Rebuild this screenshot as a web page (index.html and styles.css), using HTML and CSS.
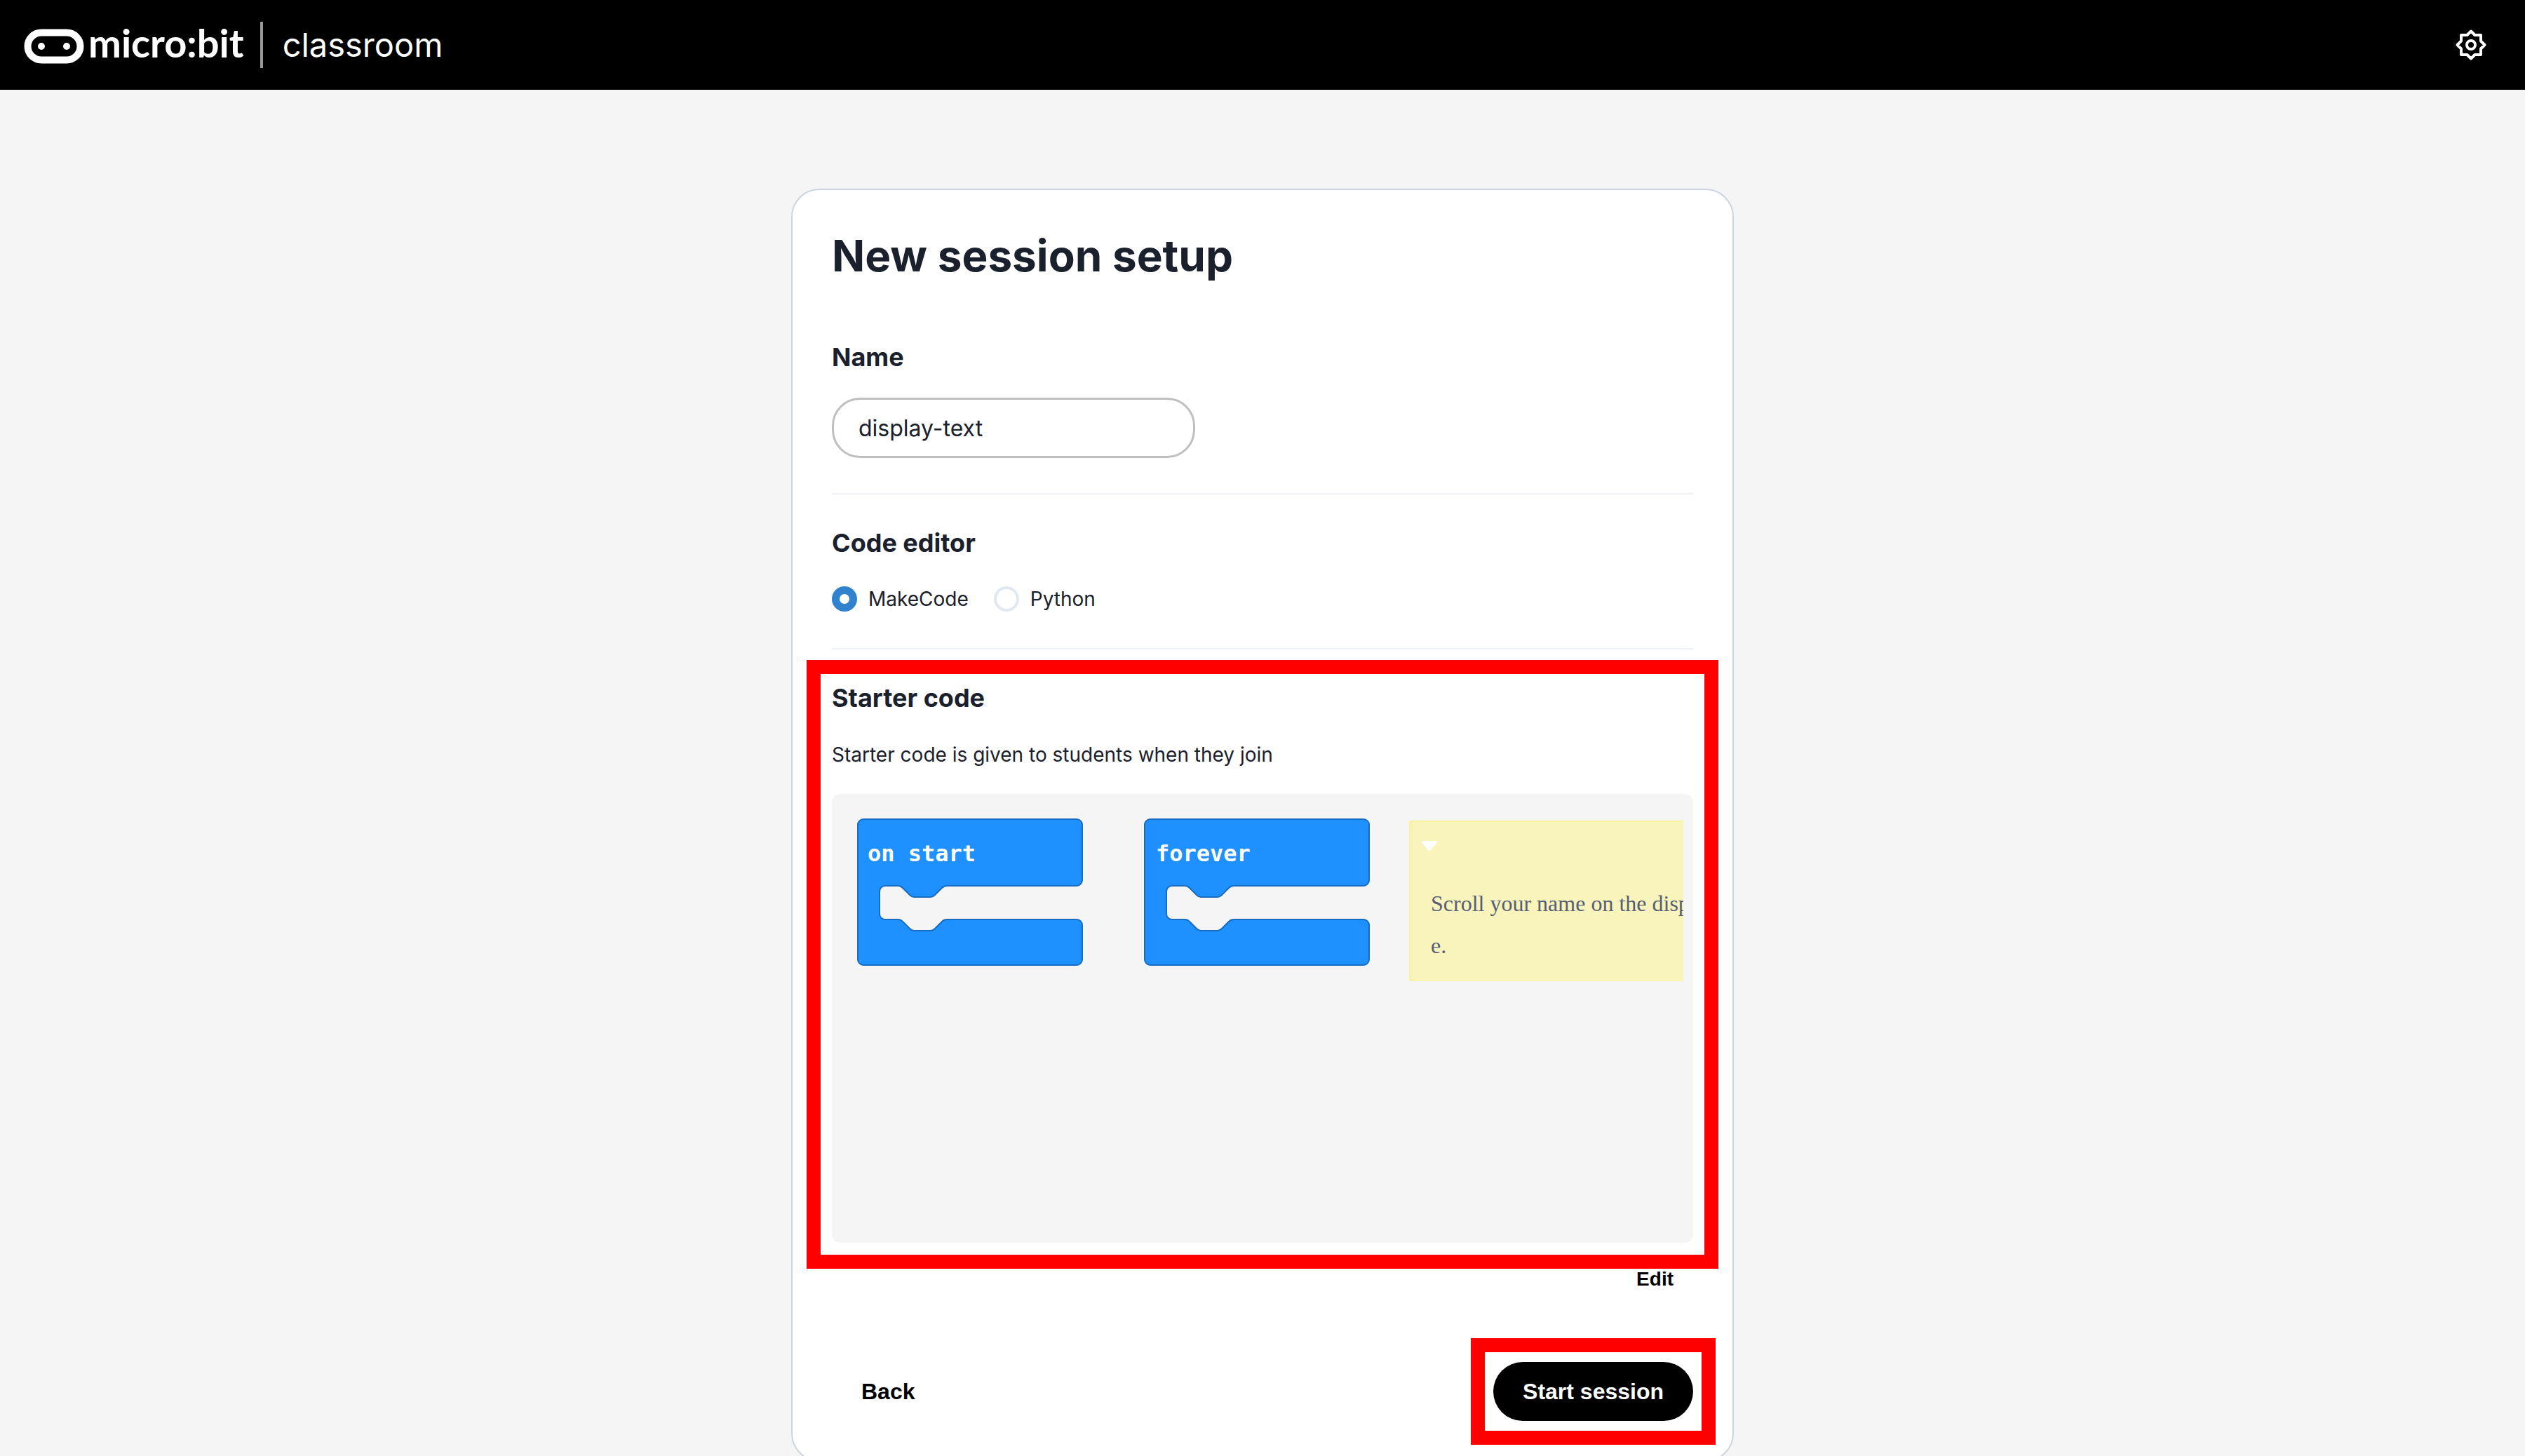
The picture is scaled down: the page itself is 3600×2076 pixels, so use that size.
FILE: index.html
```html
<!DOCTYPE html>
<html lang="en">
<head>
<meta charset="utf-8">
<meta name="viewport" content="width=device-width, initial-scale=1">
<title>micro:bit classroom</title>
<link rel="stylesheet" href="styles.css">
</head>
<body>
<header class="topbar">
  <a class="brand" href="#">
    <svg class="brand-mark" viewBox="0 0 86 50" aria-hidden="true">
      <rect x="5.5" y="5.5" width="75" height="39" rx="19.5" fill="none" stroke="#fff" stroke-width="10"/>
      <circle cx="25" cy="25" r="5" fill="#fff"/>
      <circle cx="61" cy="25" r="5" fill="#fff"/>
    </svg>
    <span class="brand-name">micro:bit</span>
    <span class="brand-rule"></span>
    <span class="brand-product">classroom</span>
  </a>
  <button class="settings" type="button" aria-label="Settings">
    <svg viewBox="-24 -24 48 48" aria-hidden="true" fill="none" stroke="#fff" stroke-width="4" stroke-linejoin="round">
      <path d="M0-19.5 5.5-14H14V-5.5L19.5 0 14 5.5V14H5.5L0 19.5-5.5 14H-14V5.5L-19.5 0-14-5.5V-14H-5.5Z"/>
      <circle r="6"/>
    </svg>
  </button>
</header>
<main class="page">
  <form class="card">
    <h1 class="title">New session setup</h1>

    <section class="section">
      <h2 class="heading"><label for="name">Name</label></h2>
      <input class="name-input" id="name" type="text" value="display-text">
    </section>

    <section class="section">
      <h2 class="heading" id="editor-heading">Code editor</h2>
      <div class="options" role="radiogroup" aria-labelledby="editor-heading">
        <label class="option"><input class="radio" type="radio" name="editor" checked>MakeCode</label>
        <label class="option"><input class="radio" type="radio" name="editor">Python</label>
      </div>
    </section>

    <section class="section">
      <div class="highlight highlight-section">
        <h2 class="heading">Starter code</h2>
        <p class="description">Starter code is given to students when they join</p>
        <div class="preview">
          <svg class="blocks" width="1178" height="234" viewBox="0 0 1178 234">
            <defs>
              <path id="block" d="M0 8a8 8 0 0 1 8-8H312a8 8 0 0 1 8 8V87a8 8 0 0 1-8 8H127c-3 0-5 1-7 3l-10 10c-2 2-4 3-6 3H80c-2 0-4-1-6-3l-10-10c-2-2-4-3-6-3H39a8 8 0 0 0-8 8V135a8 8 0 0 0 8 8H58c2 0 4 1 6 3l10 10c2 2 4 3 6 3H104c2 0 4-1 6-3l10-10c2-2 4-3 7-3H312a8 8 0 0 1 8 8V200a8 8 0 0 1-8 8H8a8 8 0 0 1-8-8Z"/>
            </defs>
            <use class="block" href="#block" x="1" y="1"/>
            <text class="block-text" x="15" y="61">on start</text>
            <use class="block" href="#block" x="410" y="1"/>
            <text class="block-text" x="426" y="61">forever</text>
            <rect x="787" y="3" width="420" height="229" rx="2" fill="#f9f0a0"/>
            <rect x="789" y="5" width="420" height="226" rx="7" fill="#f8f4bc"/>
            <path d="M807 34h18l-9 10Z" fill="#fff" stroke="#fff" stroke-width="4" stroke-linejoin="round"/>
            <text class="note-text" x="818" y="132">Scroll your name on the disp</text>
            <text class="note-text" x="818" y="192">e.</text>
          </svg>
        </div>
      </div>
      <div class="preview-actions">
        <button class="button button-small" type="button">Edit</button>
      </div>
    </section>

    <div class="footer">
      <button class="button button-ghost" type="button">Back</button>
      <div class="highlight highlight-button">
        <button class="button button-primary" type="submit">Start session</button>
      </div>
    </div>
  </form>
</main>
</body>
</html>
```
FILE: styles.css
```css
* {
  box-sizing: border-box;
}

body {
  margin: 0;
  height: 100vh;
  overflow: hidden;
  background: #f5f5f5;
  color: #1a202c;
  font-family: Inter, "Liberation Sans", sans-serif;
  font-size: 28px;
  line-height: 36px;
}

h1, h2, p {
  margin: 0;
}

button {
  border: 0;
  padding: 0;
  background: none;
  color: inherit;
  cursor: pointer;
}

/* Top bar */
.topbar {
  display: flex;
  align-items: center;
  justify-content: space-between;
  height: 128px;
  padding: 0 53px 0 34px;
  background: #000;
  color: #fff;
}

.brand {
  display: flex;
  align-items: center;
  color: inherit;
  text-decoration: none;
}

.brand-mark {
  width: 86px;
  height: 50px;
  margin: 4px 6px 0 0;
}

.brand-name {
  font-family: Lato, sans-serif;
  font-size: 56px;
  font-weight: 700;
  line-height: 64px;
  margin-bottom: 6px;
}

.brand-rule {
  width: 4px;
  height: 66px;
  margin: 0 28px 0 23px;
  background: #999;
}

.brand-product {
  font-size: 47px;
  line-height: 64px;
}

.settings {
  display: flex;
}

.settings svg {
  width: 48px;
  height: 48px;
}

/* Card */
.page {
  padding: 141px 24px;
}

.card {
  max-width: 1344px;
  margin: 0 auto;
  padding: 56px;
  border: 2px solid #cbd5e0;
  border-radius: 40px;
  background: #fff;
}

.title {
  margin-bottom: 84px;
  font-size: 62px;
  line-height: 76px;
}

.section + .section {
  margin-top: 50px;
  padding-top: 47px;
  border-top: 2px solid #edf2f7;
}

.heading {
  font-size: 36px;
  line-height: 44px;
}

.name-input {
  display: block;
  width: 518px;
  height: 86px;
  margin-top: 36px;
  padding: 0 35px;
  border: 3px solid #bfbfbf;
  border-radius: 40px;
  background: #fff;
  color: inherit;
  font: inherit;
  font-size: 32px;
}

.options {
  display: flex;
  gap: 36px;
  margin-top: 40px;
  padding-bottom: 2px;
}

.option {
  display: flex;
  align-items: center;
  gap: 16px;
}

.radio {
  appearance: none;
  width: 36px;
  height: 36px;
  margin: 0;
  border: 4px solid #e2e8f0;
  border-radius: 50%;
  background: #fff;
}

.radio:checked {
  border: 11px solid #3182ce;
}

.description {
  margin-top: 41px;
}

/* Code preview */
.preview {
  min-height: 640px;
  margin-top: 38px;
  padding: 35px 14px 35px 36px;
  border-radius: 12px;
  background: #f5f5f5;
}

.blocks {
  display: block;
  max-width: 100%;
}

.block {
  fill: #1e90ff;
  stroke: #176cbf;
  stroke-width: 2px;
}

.block-text {
  fill: #fff;
  font: 700 32px "DejaVu Sans Mono", monospace;
}

.note-text {
  fill: #575e75;
  font: 32px "Liberation Serif", serif;
}

.preview-actions {
  display: flex;
  justify-content: flex-end;
  margin-top: 34px;
  padding-right: 28px;
}

/* Buttons */
.button {
  font-family: "Liberation Sans", sans-serif;
  font-size: 32px;
  font-weight: 700;
  line-height: 36px;
  color: #000;
}

.button-small {
  font-size: 28px;
}

.button-ghost,
.button-primary {
  height: 84px;
  padding: 0 42px;
  border-radius: 42px;
}

.button-primary {
  display: block;
  background: #000;
  color: #fff;
}

.footer {
  display: flex;
  justify-content: space-between;
  margin-top: 100px;
}

/* Red call-out frames drawn over the form */
.highlight {
  position: relative;
}

.highlight::after {
  content: "";
  position: absolute;
  border: 20px solid #f00;
  pointer-events: none;
}

.highlight-section::after {
  inset: -32px -36px -37px;
}

.highlight-button::after {
  inset: -34px -32px;
}
```
